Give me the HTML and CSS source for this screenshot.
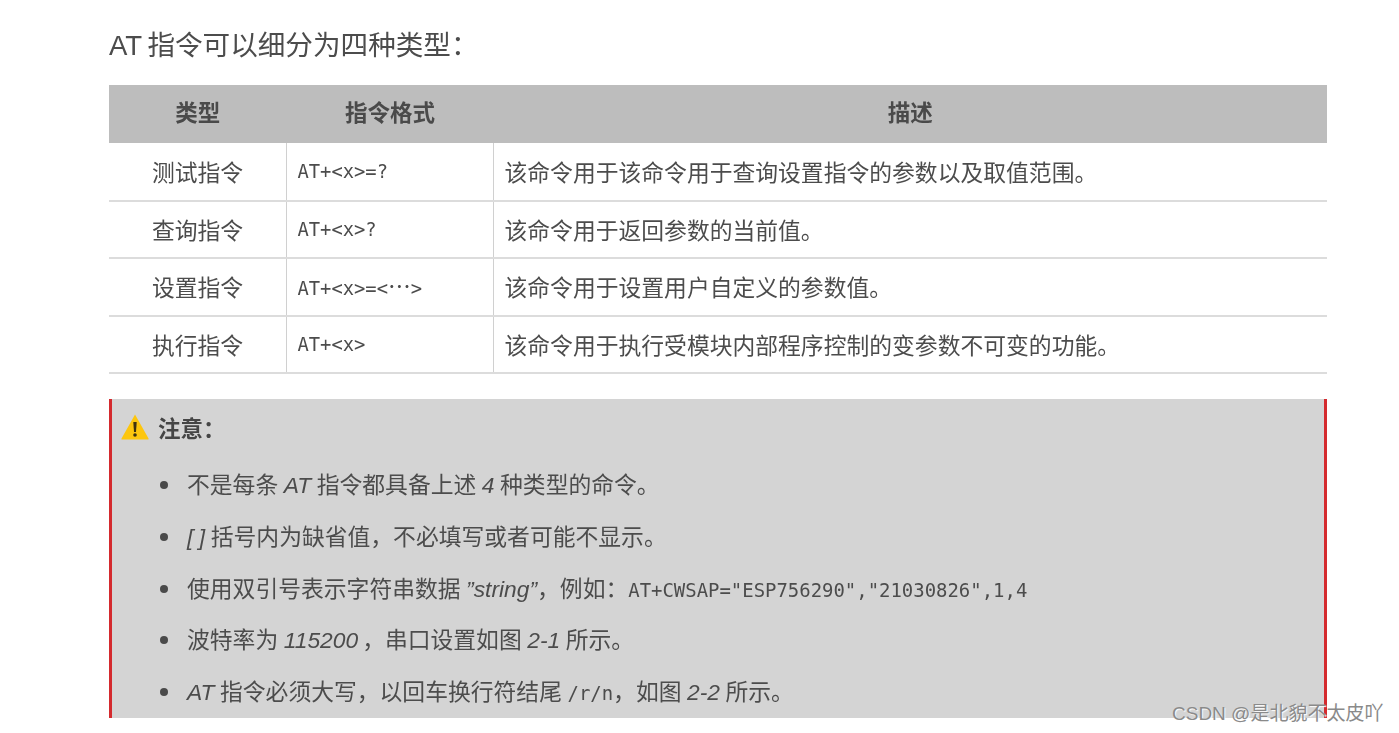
FILE: index.html
```html
<!DOCTYPE html>
<html lang="zh">
<head>
<meta charset="utf-8">
<title>AT 指令</title>
<link rel="stylesheet" href="styles.css">
</head>
<body>
<main class="page">
  <h1 class="title">AT 指令可以细分为四种类型：</h1>
  <table class="cmd-table">
    <thead>
      <tr><th class="col-type">类型</th><th class="col-format">指令格式</th><th>描述</th></tr>
    </thead>
    <tbody>
      <tr><td class="type">测试指令</td><td class="format">AT+&lt;x&gt;=?</td><td>该命令用于该命令用于查询设置指令的参数以及取值范围。</td></tr>
      <tr><td class="type">查询指令</td><td class="format">AT+&lt;x&gt;?</td><td>该命令用于返回参数的当前值。</td></tr>
      <tr><td class="type">设置指令</td><td class="format">AT+&lt;x&gt;=&lt;<span class="ellipsis">⋯</span>&gt;</td><td>该命令用于设置用户自定义的参数值。</td></tr>
      <tr><td class="type">执行指令</td><td class="format">AT+&lt;x&gt;</td><td>该命令用于执行受模块内部程序控制的变参数不可变的功能。</td></tr>
    </tbody>
  </table>
  <section class="note">
    <div class="note-head">
      <svg class="warn" viewBox="0 0 28 26" width="28" height="26" aria-hidden="true">
        <path d="M14 .5 L27.500 24.500 Q28 25.500 27 25.500 L1 25.500 Q0 25.500 .5 24.500 Z" fill="#fdc60e"/>
        <path d="M12.300 8 H15.700 L15 18 H13 Z" fill="#3d3210"/>
        <circle cx="14" cy="21" r="1.800" fill="#3d3210"/>
      </svg>
      <strong>注意：</strong>
    </div>
    <ul class="note-list">
      <li>不是每条 <i>AT</i> 指令都具备上述 <i>4</i> 种类型的命令。</li>
      <li><i>[ ]</i> 括号内为缺省值，不必填写或者可能不显示。</li>
      <li>使用双引号表示字符串数据 <i>”string”</i>，例如：<code>AT+CWSAP="ESP756290","21030826",1,4</code></li>
      <li>波特率为 <i class="baud">115200</i>，串口设置如图 <i>2-1</i> 所示。</li>
      <li><i>AT</i> 指令必须大写，以回车换行符结尾 <code>/r/n</code>，如图 <i>2-2</i> 所示。</li>
    </ul>
  </section>
</main>
<div class="watermark">CSDN @是北貌不太皮吖</div>
</body>
</html>
```
FILE: styles.css
```css
* { box-sizing: border-box; }
html, body { margin: 0; height: 733px; overflow: hidden; background: #fff; }
body { font-family: "Liberation Sans", "Noto Sans CJK SC", sans-serif; color: #4c4c4c; }
.page { width: 1218px; margin-left: 109px; padding-top: 27px; filter: blur(.4px); }
.title { margin: 0; height: 58px; font-size: 27.600px; line-height: 38px; font-weight: 400; word-spacing: -2px; color: #4c4c4c; }
.cmd-table { width: 1218px; border-collapse: collapse; table-layout: fixed; font-size: 22.800px; }
.cmd-table th { height: 58px; padding: 0 0 7px; background: #bdbdbd; font-size: 22.500px; font-weight: 700; color: #4a4a4a; }
.col-type { width: 177.500px; }
.col-format { width: 207px; }
.cmd-table td { height: 57.500px; padding: 0 0 0 10.500px; border-bottom: 2px solid #dcdcdc; }
.cmd-table td + td { border-left: 1px solid #d0d0d0; }
.cmd-table td.type { padding: 0; text-align: center; }
.cmd-table td.format { font-family: "DejaVu Sans Mono", monospace; font-size: 18.800px; }
.ellipsis { font-family: "Noto Sans CJK SC", sans-serif; font-size: 22.800px; line-height: 1; }
.note { height: 319px; margin-top: 25px; padding: 13px 0 0 9px; background: #d4d4d4; border-left: 3px solid #d42a2e; border-right: 3px solid #d42a2e; }
.note-head { display: flex; align-items: center; gap: 9px; height: 30px; font-size: 22.500px; color: #454545; }
.note-list { margin: 18px 0 0; padding: 0 0 0 66px; font-size: 22.800px; word-spacing: -.8px; list-style: none; }
.note-list li { position: relative; height: 51.800px; line-height: 51.800px; white-space: nowrap; }
.note-list li::before { content: ""; position: absolute; left: -27px; top: 21px; width: 8px; height: 8px; border-radius: 50%; background: #4a4a4a; }
.note-list i { font-style: italic; }
.note-list .baud { margin-right: 4px; }
.note-list code { font-family: "DejaVu Sans Mono", monospace; font-size: 18.950px; }
.watermark { position: absolute; left: 1172px; top: 702px; font-size: 19px; line-height: 24px; color: #8a8a8a; text-shadow: 1px 1px 1px #fff; white-space: nowrap; }
```
